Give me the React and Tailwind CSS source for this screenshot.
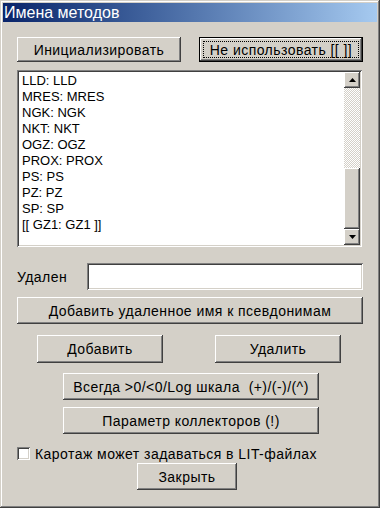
import React from "react";

const raised =
  "bg-[#d4d0c8] shadow-[inset_-1px_-1px_#404040,inset_1px_1px_#ffffff,inset_-2px_-2px_#808080,inset_2px_2px_#d4d0c8]";
const sunken =
  "shadow-[inset_1px_1px_#808080,inset_-1px_-1px_#ffffff,inset_2px_2px_#404040,inset_-2px_-2px_#d4d0c8]";

function Btn({ children, className = "" }) {
  return (
    <div
      className={`${raised} flex items-center justify-center text-[14px] tracking-[0.45px] text-black leading-none ${className}`}
    >
      {children}
    </div>
  );
}

function Arrow({ up }) {
  return (
    <svg width="7" height="4" viewBox="0 0 7 4">
      {up ? (
        <polygon points="3.5,0 7,4 0,4" fill="#000" />
      ) : (
        <polygon points="0,0 7,0 3.5,4" fill="#000" />
      )}
    </svg>
  );
}

const items = [
  "LLD: LLD",
  "MRES: MRES",
  "NGK: NGK",
  "NKT: NKT",
  "OGZ: OGZ",
  "PROX: PROX",
  "PS: PS",
  "PZ: PZ",
  "SP: SP",
  "[[ GZ1: GZ1 ]]",
];

export default function App() {
  return (
    <div
      className="w-[380px] h-[508px] bg-[#d4d0c8] p-[3px] flex flex-col shadow-[inset_-1px_-1px_#404040,inset_1px_1px_#d4d0c8,inset_-2px_-2px_#808080,inset_2px_2px_#ffffff]"
      style={{ fontFamily: '"Liberation Sans", Arial, sans-serif' }}
    >
      <div className="h-[19px] bg-gradient-to-r from-[#0a246a] to-[#a6caf0] flex items-center pl-[1px] text-white text-[16px] leading-none">
        Имена методов
      </div>

      <div className="mt-[15px] ml-[14px] flex gap-[18px]">
        <Btn className="w-[164px] h-[25px]">Инициализировать</Btn>
        <div className="w-[164px] h-[25px] border border-black">
          <div className={`${raised} w-full h-full p-[3px]`}>
            <div className="w-full h-full border border-dotted border-black flex items-center justify-center text-[14px] tracking-[0.45px] leading-none">
              Не использовать [[ ]]
            </div>
          </div>
        </div>
      </div>

      <div
        className={`${sunken} mt-[8px] ml-[14px] w-[345px] h-[177px] bg-white p-[2px] flex`}
      >
        <div className="flex-1 pl-[3px] pt-[1px] text-[13px] leading-[16px] text-black">
          {items.map((t) => (
            <div key={t} className="h-[16px] whitespace-pre">
              {t}
            </div>
          ))}
        </div>
        <div className="w-[16px] flex flex-col">
          <div className={`${raised} h-[16px] flex items-center justify-center`}>
            <Arrow up />
          </div>
          <div className="flex-1 bg-[repeating-conic-gradient(#d4d0c8_0%_25%,#ffffff_0%_50%)] bg-size-[2px_2px]" />
          <div className={`${raised} h-[61px]`} />
          <div className={`${raised} h-[16px] flex items-center justify-center`}>
            <Arrow />
          </div>
        </div>
      </div>

      <div className="mt-[16px] ml-[14px] flex items-center h-[27px]">
        <div className="w-[70px] text-[14px] tracking-[0.45px] leading-none">Удален</div>
        <div className={`${sunken} bg-white w-[276px] h-[27px]`} />
      </div>

      <Btn className="mt-[7px] ml-[14px] w-[346px] h-[27px]">
        Добавить удаленное имя к псевдонимам
      </Btn>

      <div className="mt-[11px] ml-[34px] flex gap-[52px]">
        <Btn className="w-[126px] h-[28px]">Добавить</Btn>
        <Btn className="w-[126px] h-[28px]">Удалить</Btn>
      </div>

      <Btn className="mt-[10px] ml-[60px] w-[256px] h-[27px]">
        Всегда &gt;0/&lt;0/Log шкала&nbsp; (+)/(-)/(^)
      </Btn>
      <Btn className="mt-[7px] ml-[60px] w-[256px] h-[27px]">
        Параметр коллекторов (!)
      </Btn>

      <div className="mt-[13px] ml-[14px] flex items-center h-[13px]">
        <div className={`${sunken} bg-white w-[13px] h-[13px]`} />
        <div className="ml-[5px] text-[14px] tracking-[0.45px] leading-none">
          Каротаж может задаваться в LIT-файлах
        </div>
      </div>

      <Btn className="mt-[3px] ml-[134px] w-[100px] h-[27px]">Закрыть</Btn>
    </div>
  );
}
